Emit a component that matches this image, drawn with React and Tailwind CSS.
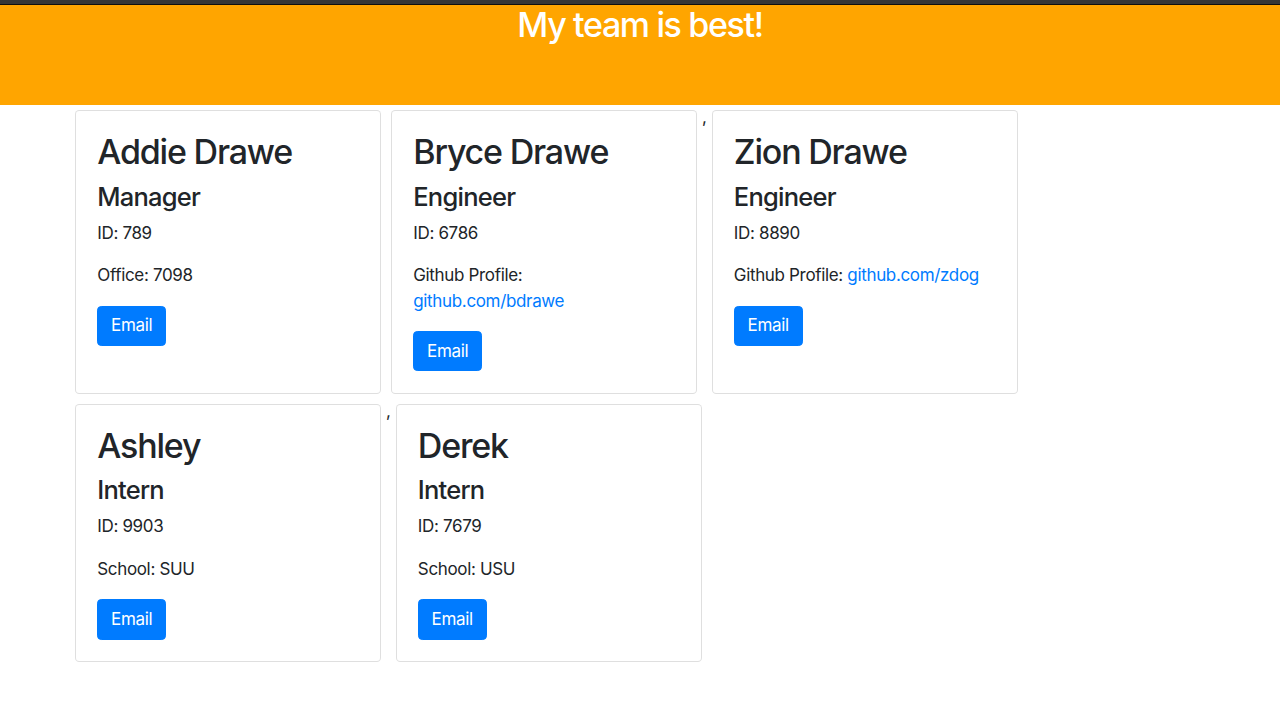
import React from 'react';

const team = [
  [{ name: 'Addie Drawe', role: 'Manager', id: 789, extra: { label: 'Office', value: '7098' } }],
  [
    { name: 'Bryce Drawe', role: 'Engineer', id: 6786, extra: { label: 'Github Profile', value: 'github.com/bdrawe', link: true } },
    { name: 'Zion Drawe', role: 'Engineer', id: 8890, extra: { label: 'Github Profile', value: 'github.com/zdog', link: true } },
  ],
  [
    { name: 'Ashley', role: 'Intern', id: 9903, extra: { label: 'School', value: 'SUU' } },
    { name: 'Derek', role: 'Intern', id: 7679, extra: { label: 'School', value: 'USU' } },
  ],
];

const Card = ({ member }) => (
  <div className="w-[306px] m-[5px] bg-white border border-black/[.125] rounded-[4.25px] flex flex-col">
    <div className="p-[21.25px] flex flex-col items-start">
      <h2 className="text-[34px] leading-[40.8px] font-medium tracking-[-0.035em] mb-[8.5px]">{member.name}</h2>
      <h4 className="text-[25.5px] leading-[30.6px] font-medium tracking-[-0.03em] mb-[8.5px]">{member.role}</h4>
      <p className="mb-[17px]">ID: {member.id}</p>
      <p className="mb-[17px]">
        {member.extra.label}:{' '}
        {member.extra.link ? (
          <a href="#" className="text-[#007bff]">{member.extra.value}</a>
        ) : (
          member.extra.value
        )}
      </p>
      <button className="bg-[#007bff] border border-[#007bff] text-white rounded-[4.25px] px-[12.75px] py-[6.375px] text-[17px] leading-[25.5px]">
        Email
      </button>
    </div>
  </div>
);

export default function App() {
  return (
    <div className="min-h-screen bg-white text-[#212529] text-[17px] leading-[25.5px] tracking-[-0.02em] font-[Inter,sans-serif]">
      <div className="h-[4px] bg-[#363636]" />
      <div className="h-px bg-[#0f0f0f]" />
      <header className="h-[100px] bg-[#ffa500]">
        <h1 className="text-center text-white text-[34px] leading-[40.8px] font-medium tracking-[-0.04em]">My team is best!</h1>
      </header>
      <main className="w-[1140px] mx-auto flex flex-wrap">
        {team.map((group) =>
          group.map((m, i) => (
            <React.Fragment key={m.name}>
              {i > 0 && <span>,</span>}
              <Card member={m} />
            </React.Fragment>
          ))
        )}
      </main>
    </div>
  );
}
